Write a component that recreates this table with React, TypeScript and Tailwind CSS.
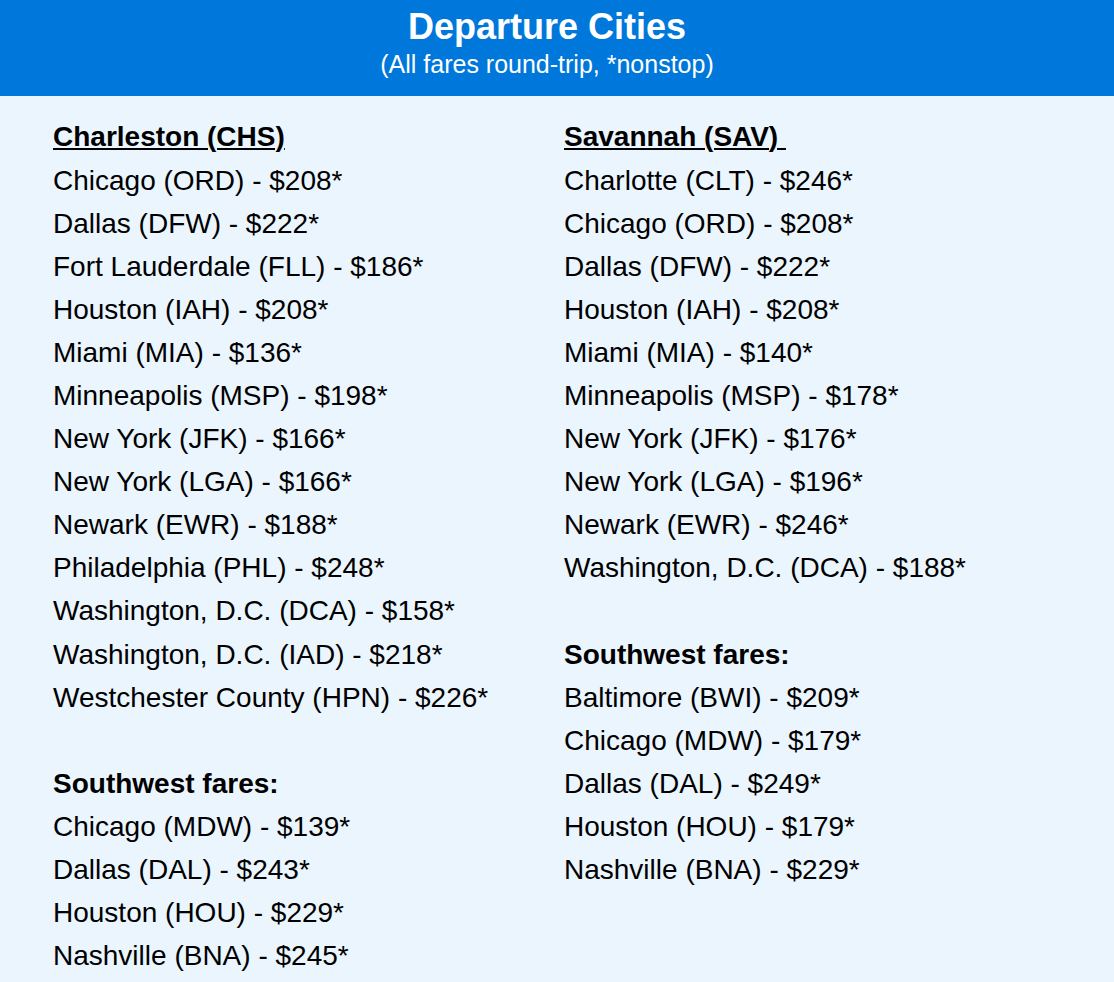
import React from "react";

const left = [
  "Chicago (ORD) - $208*",
  "Dallas (DFW) - $222*",
  "Fort Lauderdale (FLL) - $186*",
  "Houston (IAH) - $208*",
  "Miami (MIA) - $136*",
  "Minneapolis (MSP) - $198*",
  "New York (JFK) - $166*",
  "New York (LGA) - $166*",
  "Newark (EWR) - $188*",
  "Philadelphia (PHL) - $248*",
  "Washington, D.C. (DCA) - $158*",
  "Washington, D.C. (IAD) - $218*",
  "Westchester County (HPN) - $226*",
];
const leftSW = [
  "Chicago (MDW) - $139*",
  "Dallas (DAL) - $243*",
  "Houston (HOU) - $229*",
  "Nashville (BNA) - $245*",
];
const right = [
  "Charlotte (CLT) - $246*",
  "Chicago (ORD) - $208*",
  "Dallas (DFW) - $222*",
  "Houston (IAH) - $208*",
  "Miami (MIA) - $140*",
  "Minneapolis (MSP) - $178*",
  "New York (JFK) - $176*",
  "New York (LGA) - $196*",
  "Newark (EWR) - $246*",
  "Washington, D.C. (DCA) - $188*",
];
const rightSW = [
  "Baltimore (BWI) - $209*",
  "Chicago (MDW) - $179*",
  "Dallas (DAL) - $249*",
  "Houston (HOU) - $179*",
  "Nashville (BNA) - $229*",
];

function Column({ title, items, sw }: { title: string; items: string[]; sw: string[] }) {
  return (
    <div className="flex flex-col">
      <div className="h-[45px] leading-[45px] font-bold underline underline-offset-[2px] decoration-2 whitespace-pre">{title}</div>
      {items.map((t) => (
        <div key={t} className="h-[43.1px] leading-[43.1px] whitespace-nowrap">{t}</div>
      ))}
      <div className="h-[43.1px]" />
      <div className="h-[43.1px] leading-[43.1px] font-bold">Southwest fares:</div>
      {sw.map((t) => (
        <div key={t} className="h-[43.1px] leading-[43.1px] whitespace-nowrap">{t}</div>
      ))}
    </div>
  );
}

export default function App() {
  return (
    <div
      className="w-[1114px] h-[982px] overflow-hidden bg-[#ebf5fe] text-black"
      style={{ fontFamily: '"Liberation Sans", Arial, Helvetica, sans-serif' }}
    >
      <div className="h-[96px] bg-[#0077da] text-white flex flex-col items-center pt-[9px] pr-[20px]">
        <div className="text-[36px] font-bold leading-[36px]">Departure Cities</div>
        <div className="text-[25px] leading-[25px] mt-[7px]">(All fares round-trip, *nonstop)</div>
      </div>
      <div className="grid grid-cols-[511px_1fr] pl-[53px] pt-[17.5px] text-[28px]">
        <Column title="Charleston (CHS)" items={left} sw={leftSW} />
        <Column title="Savannah (SAV) " items={right} sw={rightSW} />
      </div>
    </div>
  );
}
